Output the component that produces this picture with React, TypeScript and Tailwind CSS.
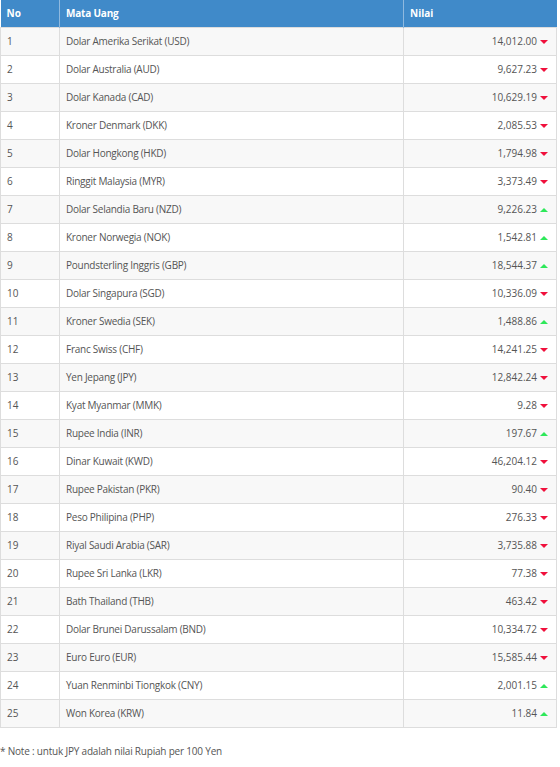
const rates: [string, string, boolean][] = [
  ["Dolar Amerika Serikat (USD)", "14,012.00", false],
  ["Dolar Australia (AUD)", "9,627.23", false],
  ["Dolar Kanada (CAD)", "10,629.19", false],
  ["Kroner Denmark (DKK)", "2,085.53", false],
  ["Dolar Hongkong (HKD)", "1,794.98", false],
  ["Ringgit Malaysia (MYR)", "3,373.49", false],
  ["Dolar Selandia Baru (NZD)", "9,226.23", true],
  ["Kroner Norwegia (NOK)", "1,542.81", true],
  ["Poundsterling Inggris (GBP)", "18,544.37", true],
  ["Dolar Singapura (SGD)", "10,336.09", false],
  ["Kroner Swedia (SEK)", "1,488.86", true],
  ["Franc Swiss (CHF)", "14,241.25", false],
  ["Yen Jepang (JPY)", "12,842.24", false],
  ["Kyat Myanmar (MMK)", "9.28", false],
  ["Rupee India (INR)", "197.67", true],
  ["Dinar Kuwait (KWD)", "46,204.12", false],
  ["Rupee Pakistan (PKR)", "90.40", false],
  ["Peso Philipina (PHP)", "276.33", false],
  ["Riyal Saudi Arabia (SAR)", "3,735.88", false],
  ["Rupee Sri Lanka (LKR)", "77.38", false],
  ["Bath Thailand (THB)", "463.42", false],
  ["Dolar Brunei Darussalam (BND)", "10,334.72", false],
  ["Euro Euro (EUR)", "15,585.44", false],
  ["Yuan Renminbi Tiongkok (CNY)", "2,001.15", true],
  ["Won Korea (KRW)", "11.84", true],
];

const Arrow = ({ up }: { up: boolean }) =>
  up ? (
    <span className="inline-block w-0 h-0 border-x-[4px] border-x-transparent border-b-[4px] border-b-[#2ee85a] ml-[3px] align-[1px]"></span>
  ) : (
    <span className="inline-block w-0 h-0 border-x-[4px] border-x-transparent border-t-[4px] border-t-[#f0103c] ml-[3px] align-[1px]"></span>
  );

const App = () => {
  return (
    <div className="w-[560px] min-h-[767px] bg-white font-['Open_Sans',sans-serif] text-[10px] text-[#555]">
      <table className="w-[557px] border-collapse table-fixed">
        <thead>
          <tr className="h-[27px] bg-[#408ac9] text-white font-bold text-left">
            <th className="w-[59px] px-[6px] border-r border-[#8fb9df] font-bold">No</th>
            <th className="w-[344px] px-[6px] border-r border-[#8fb9df] font-bold tracking-[-0.2px]">Mata Uang</th>
            <th className="px-[6px] font-bold">Nilai</th>
          </tr>
        </thead>
        <tbody>
          {rates.map(([name, value, up], i) => (
            <tr
              key={name}
              className={`h-[28px] ${i % 2 === 0 ? "bg-[#f8f8f8]" : "bg-white"}`}
            >
              <td className="px-[6px] border border-[#dddddd]">{i + 1}</td>
              <td className="px-[6px] border border-[#dddddd] tracking-[-0.25px]">{name}</td>
              <td className="pl-[6px] pr-[8px] border border-[#dddddd] text-right whitespace-nowrap">
                {value}
                <Arrow up={up} />
              </td>
            </tr>
          ))}
        </tbody>
      </table>
      <p className="mt-[16px] leading-[14px] tracking-[-0.2px]">* Note : untuk JPY adalah nilai Rupiah per 100 Yen</p>
    </div>
  );
};

export default App;
